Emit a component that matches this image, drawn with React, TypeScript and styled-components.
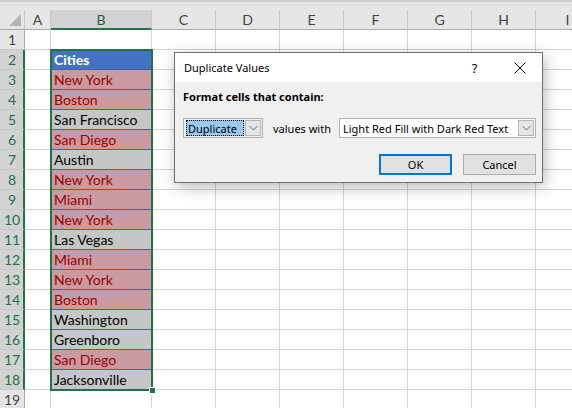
import React from "react";
import styled, { createGlobalStyle } from "styled-components";

const GREEN = "#217346";

const GlobalStyle = createGlobalStyle`
  html, body {
    margin: 0;
    padding: 0;
    background: #ffffff;
    overflow: hidden;
  }
`;

type Kind = "head" | "dup" | "plain";

const cities: { name: string; kind: Kind }[] = [
  { name: "Cities", kind: "head" },
  { name: "New York", kind: "dup" },
  { name: "Boston", kind: "dup" },
  { name: "San Francisco", kind: "plain" },
  { name: "San Diego", kind: "dup" },
  { name: "Austin", kind: "plain" },
  { name: "New York", kind: "dup" },
  { name: "Miami", kind: "dup" },
  { name: "New York", kind: "dup" },
  { name: "Las Vegas", kind: "plain" },
  { name: "Miami", kind: "dup" },
  { name: "New York", kind: "dup" },
  { name: "Boston", kind: "dup" },
  { name: "Washington", kind: "plain" },
  { name: "Greenboro", kind: "plain" },
  { name: "San Diego", kind: "dup" },
  { name: "Jacksonville", kind: "plain" },
];

const columns = ["A", "B", "C", "D", "E", "F", "G", "H", "I"];
const emptyCols = ["C", "D", "E", "F", "G", "H", "I"];

const Sheet = styled.div`
  position: relative;
  width: 572px;
  height: 408px;
  overflow: hidden;
  background: #ffffff;
  font-family: Lato, "Liberation Sans", sans-serif;
`;

const TopStrip = styled.div`
  height: 10px;
  background: #e6e6e6;
  border-top: 2px solid #d0d0d0;
  box-sizing: border-box;
`;

const Grid = styled.div`
  display: grid;
  grid-template-columns: 25px 26px 101px repeat(7, 64px);
  grid-auto-rows: 20px;
`;

const Corner = styled.div`
  background: #e6e6e6;
  border-right: 1px solid #c8c8c8;
  border-bottom: 1px solid #ababab;
  box-sizing: border-box;
  position: relative;
  svg {
    position: absolute;
    right: 3px;
    bottom: 3px;
  }
`;

const ColHead = styled.div<{ $selected?: boolean }>`
  background: ${(p) => (p.$selected ? "#d2d2d2" : "#e6e6e6")};
  border-right: 1px solid #c8c8c8;
  border-bottom: ${(p) => (p.$selected ? `2px solid ${GREEN}` : "1px solid #ababab")};
  box-sizing: border-box;
  display: flex;
  align-items: center;
  justify-content: center;
  font-size: 14px;
  color: ${(p) => (p.$selected ? "#1e5e3a" : "#444444")};
  padding-top: ${(p) => (p.$selected ? "1px" : "0")};
`;

const RowHead = styled.div<{ $selected?: boolean }>`
  background: ${(p) => (p.$selected ? "#d2d2d2" : "#e6e6e6")};
  border-right: ${(p) => (p.$selected ? `2px solid ${GREEN}` : "1px solid #ababab")};
  border-bottom: 1px solid #c8c8c8;
  box-sizing: border-box;
  display: flex;
  align-items: center;
  justify-content: center;
  font-size: 14px;
  color: ${(p) => (p.$selected ? GREEN : "#444444")};
  padding-left: ${(p) => (p.$selected ? "1px" : "0")};
`;

const Cell = styled.div`
  border-right: 1px solid #d4d4d4;
  border-bottom: 1px solid #d4d4d4;
  box-sizing: border-box;
`;

const CityCell = styled.div<{ $kind: Kind }>`
  box-sizing: border-box;
  border-right: 1px solid #d4d4d4;
  border-bottom: 1px solid #3f63b5;
  padding-left: 3px;
  display: flex;
  align-items: center;
  font-size: 14px;
  white-space: nowrap;
  overflow: hidden;
  background: ${(p) =>
    p.$kind === "head" ? "#4472c4" : p.$kind === "dup" ? "#c99a9f" : "#c6c6c6"};
  color: ${(p) =>
    p.$kind === "head" ? "#ffffff" : p.$kind === "dup" ? "#9c0006" : "#000000"};
  font-weight: ${(p) => (p.$kind === "head" ? 700 : 400)};
`;

const Selection = styled.div`
  position: absolute;
  left: 50px;
  top: 49px;
  width: 103px;
  height: 342px;
  border: 2px solid ${GREEN};
  box-sizing: border-box;
  pointer-events: none;
`;

const FillHandle = styled.div`
  position: absolute;
  left: 149px;
  top: 387px;
  width: 7px;
  height: 7px;
  background: ${GREEN};
  border: 1px solid #ffffff;
  box-sizing: border-box;
`;

const Dialog = styled.div`
  position: absolute;
  left: 174px;
  top: 52px;
  width: 369px;
  height: 131px;
  background: #f0f0f0;
  border: 1px solid #6f6f6f;
  box-sizing: border-box;
  box-shadow: 2px 4px 14px rgba(0, 0, 0, 0.28);
  font-family: "Noto Sans", "Liberation Sans", sans-serif;
  font-size: 11px;
  color: #000000;
  display: flex;
  flex-direction: column;
  white-space: nowrap;
`;

const TitleBar = styled.div`
  height: 29px;
  background: #ffffff;
  display: flex;
  align-items: center;
  padding-left: 9px;
`;

const Title = styled.div`
  flex: 1;
`;

const TitleButton = styled.div`
  width: 45px;
  height: 29px;
  display: flex;
  align-items: center;
  justify-content: center;
  font-size: 13px;
`;

const Body = styled.div`
  padding: 7px 6px 0 8px;
  display: flex;
  flex-direction: column;
`;

const Prompt = styled.div`
  font-weight: 700;
  line-height: 16px;
`;

const ControlRow = styled.div`
  margin-top: 13px;
  display: flex;
  align-items: center;
  height: 20px;
`;

const Combo = styled.div<{ $width: number; $bg: string }>`
  width: ${(p) => p.$width}px;
  flex-shrink: 0;
  height: 20px;
  box-sizing: border-box;
  border: 1px solid #b0b0b0;
  background: ${(p) => p.$bg};
  display: flex;
  align-items: center;
  padding: 1px;
`;

const ComboText = styled.div`
  flex: 1;
  padding-left: 2px;
  overflow: hidden;
`;

const Highlight = styled.div`
  width: 58px;
  height: 16px;
  box-sizing: border-box;
  background: #99c9ef;
  border: 1px dotted #000000;
  display: flex;
  align-items: center;
  padding-left: 1px;
  margin-left: 1px;
  margin-right: auto;
`;

const ArrowBox = styled.div`
  width: 16px;
  height: 16px;
  flex-shrink: 0;
  box-sizing: border-box;
  background: #e5e5e5;
  border: 1px solid #b4b4b4;
  display: flex;
  align-items: center;
  justify-content: center;
`;

const ValuesLabel = styled.div`
  flex: 1;
  padding-left: 10px;
`;

const ButtonRow = styled.div`
  margin-top: 16px;
  display: flex;
  justify-content: flex-end;
  gap: 11px;
`;

const Button = styled.div<{ $primary?: boolean }>`
  width: 73px;
  height: 21px;
  box-sizing: border-box;
  background: #e1e1e1;
  border: ${(p) => (p.$primary ? "2px solid #0078d7" : "1px solid #adadad")};
  display: flex;
  align-items: center;
  justify-content: center;
`;

const Chevron = () => (
  <svg width="9" height="6" viewBox="0 0 9 6">
    <path d="M0.5 1 L4.5 5 L8.5 1" fill="none" stroke="#6a6a6a" strokeWidth="1" />
  </svg>
);

export default function App() {
  return (
    <Sheet>
      <GlobalStyle />
      <TopStrip />
      <Grid>
        <Corner>
          <svg width="12" height="12" viewBox="0 0 12 12">
            <path d="M12 0 L12 12 L0 12 Z" fill="#b4b4b4" />
          </svg>
        </Corner>
        {columns.map((c) => (
          <ColHead key={c} $selected={c === "B"}>
            {c}
          </ColHead>
        ))}

        <RowHead>1</RowHead>
        <Cell />
        <Cell />
        {emptyCols.map((c) => (
          <Cell key={c} />
        ))}

        {cities.map((city, i) => (
          <React.Fragment key={i}>
            <RowHead $selected>{i + 2}</RowHead>
            <Cell />
            <CityCell $kind={city.kind}>{city.name}</CityCell>
            {emptyCols.map((c) => (
              <Cell key={c} />
            ))}
          </React.Fragment>
        ))}

        <RowHead>19</RowHead>
        <Cell />
        <Cell />
        {emptyCols.map((c) => (
          <Cell key={c} />
        ))}
      </Grid>

      <Selection />
      <FillHandle />

      <Dialog>
        <TitleBar>
          <Title>Duplicate Values</Title>
          <TitleButton>?</TitleButton>
          <TitleButton>
            <svg width="12" height="12" viewBox="0 0 12 12">
              <path d="M0.5 0.5 L11.5 11.5 M11.5 0.5 L0.5 11.5" stroke="#000" strokeWidth="1" />
            </svg>
          </TitleButton>
        </TitleBar>
        <Body>
          <Prompt>Format cells that contain:</Prompt>
          <ControlRow>
            <Combo $width={80} $bg="#f0f0f0">
              <Highlight>Duplicate</Highlight>
              <ArrowBox>
                <Chevron />
              </ArrowBox>
            </Combo>
            <ValuesLabel>values with</ValuesLabel>
            <Combo $width={197} $bg="#ffffff">
              <ComboText>Light Red Fill with Dark Red Text</ComboText>
              <ArrowBox>
                <Chevron />
              </ArrowBox>
            </Combo>
          </ControlRow>
          <ButtonRow>
            <Button $primary>OK</Button>
            <Button>Cancel</Button>
          </ButtonRow>
        </Body>
      </Dialog>
    </Sheet>
  );
}
